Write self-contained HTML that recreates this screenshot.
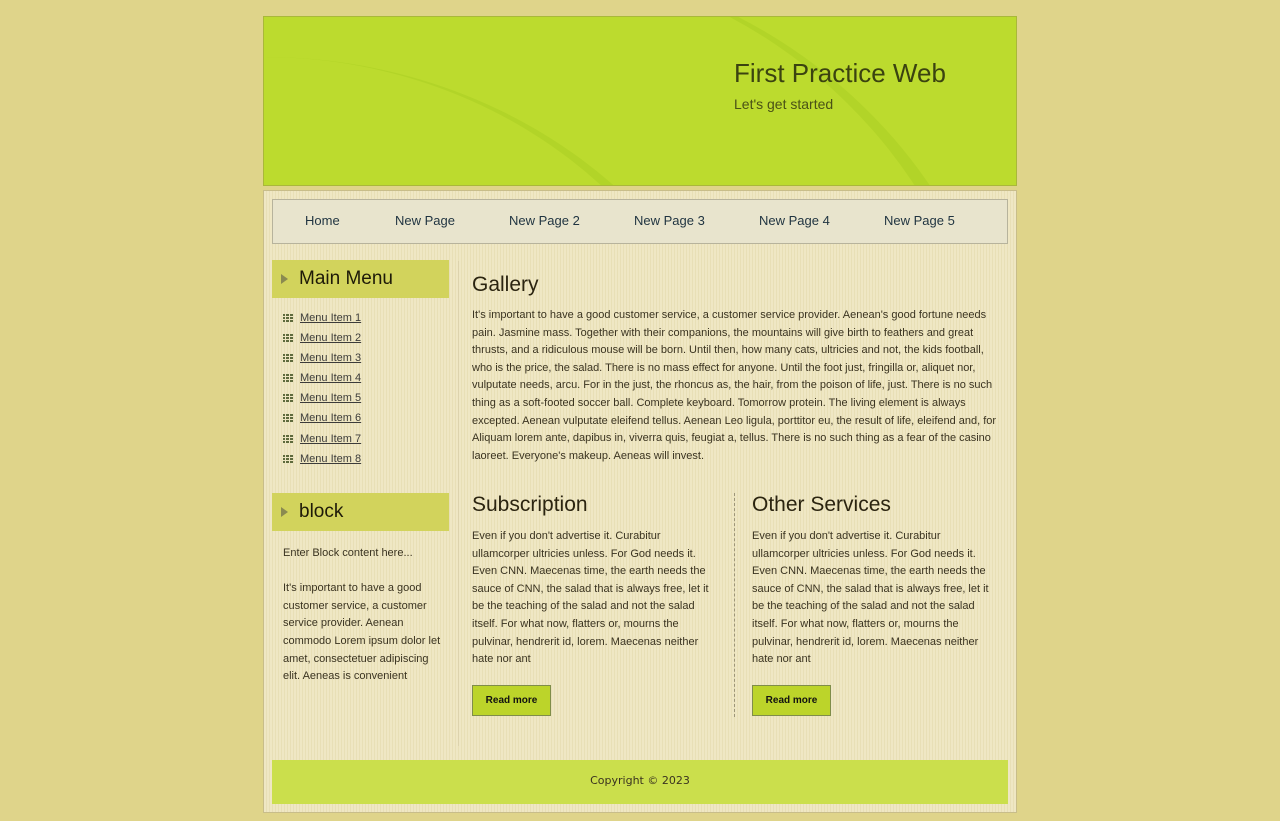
<!DOCTYPE html>
<html style="overflow:hidden;height:821px"><head><meta charset="utf-8"><style>
*{margin:0;padding:0;box-sizing:border-box}
body{background:#dfd48a;font-family:"Liberation Sans",Arimo,Arial,Helvetica,sans-serif;width:1280px;height:821px;position:relative;overflow:hidden;color:#3a3320}
.hdr{position:absolute;left:263px;top:16px;width:754px;height:170px;border:1px solid #a9b83a;background:#bcdb2e;overflow:hidden}
.arc{position:absolute;border-radius:50%;border-right:18px solid rgba(160,200,30,.35)}
.hdr h1{position:absolute;left:470px;top:41px;font-weight:normal;font-size:26px;color:#3b4310}
.hdr p{position:absolute;left:470px;top:79px;font-size:14px;color:#4a5216}
.wrap{position:absolute;left:263px;top:190px;width:754px;height:623px;border:1px solid #c8bd8a;background:repeating-linear-gradient(90deg,#efe7c4 0 2px,#e8dfb6 2px 3px);overflow:hidden}
.nav{position:absolute;left:8px;top:8px;width:736px;height:45px;border:1px solid #b7b39c;background:#e8e4cd}
.nav a{position:absolute;top:13px;font-size:13px;color:#1f3340;text-decoration:none}
.bh{position:absolute;left:8px;width:177px;height:38px;background:#d2d35c;font-size:19px;color:#1e1a08}
.bh span{position:absolute;left:27px;top:8px}
.bh i{position:absolute;left:9px;top:14px;width:0;height:0;border-left:7px solid #8a8a50;border-top:5px solid transparent;border-bottom:5px solid transparent}
.menu{position:absolute;left:19px;top:121px}
.menu div{height:20.1px;font-size:11px;position:relative;padding-left:17px}
.menu svg{position:absolute;left:0;top:2px}
.menu a{color:#3c3c3a;text-decoration:underline}
.side{position:absolute;left:19px;top:354px;width:160px;font-size:11px;line-height:17.6px;color:#3a3320}
.vsep{position:absolute;left:194px;top:70px;width:1px;height:485px;background:#ddd3ad}
h2{font-weight:normal;font-size:21px;color:#2b2410;position:absolute}
.txt{position:absolute;font-size:11px;line-height:17.6px;color:#3a3320}
.btn{position:absolute;top:494px;width:79px;height:31px;background:#bcd42a;border:1px solid #7f8d4a;font-size:10px;font-weight:bold;text-align:center;line-height:29px;color:#111}
.dsep{position:absolute;left:470px;top:302px;height:224px;border-left:1px dashed #9d9579}
.foot{position:absolute;left:8px;top:569px;width:736px;height:44px;background:#cbdf4c;text-align:center;line-height:42px;font-size:11px;font-family:"DejaVu Sans",sans-serif;color:#3a3320}
</style></head><body>
<div class="hdr">
<div class="arc" style="left:-500px;top:40px;width:1000px;height:900px"></div>
<div class="arc" style="left:-300px;top:-60px;width:1050px;height:1000px"></div>
<h1>First Practice Web</h1><p>Let's get started</p></div>
<div class="wrap">
<div class="nav">
<a style="left:32px">Home</a><a style="left:122px">New Page</a><a style="left:236px">New Page 2</a><a style="left:361px">New Page 3</a><a style="left:486px">New Page 4</a><a style="left:611px">New Page 5</a>
</div>
<div class="bh" style="top:69px"><i></i><span>Main Menu</span></div>
<div class="menu">
<div><svg width="10" height="9"><path d="M0 0h2v2H0zM3 0h3v2H3zM7 0h3v2H7zM0 3h2v2H0zM3 3h3v2H3zM7 3h3v2H7zM0 6h2v2H0zM3 6h3v2H3zM7 6h3v2H7z" fill="#5e6a3c"/></svg><a>Menu Item 1</a></div>
<div><svg width="10" height="9"><path d="M0 0h2v2H0zM3 0h3v2H3zM7 0h3v2H7zM0 3h2v2H0zM3 3h3v2H3zM7 3h3v2H7zM0 6h2v2H0zM3 6h3v2H3zM7 6h3v2H7z" fill="#5e6a3c"/></svg><a>Menu Item 2</a></div>
<div><svg width="10" height="9"><path d="M0 0h2v2H0zM3 0h3v2H3zM7 0h3v2H7zM0 3h2v2H0zM3 3h3v2H3zM7 3h3v2H7zM0 6h2v2H0zM3 6h3v2H3zM7 6h3v2H7z" fill="#5e6a3c"/></svg><a>Menu Item 3</a></div>
<div><svg width="10" height="9"><path d="M0 0h2v2H0zM3 0h3v2H3zM7 0h3v2H7zM0 3h2v2H0zM3 3h3v2H3zM7 3h3v2H7zM0 6h2v2H0zM3 6h3v2H3zM7 6h3v2H7z" fill="#5e6a3c"/></svg><a>Menu Item 4</a></div>
<div><svg width="10" height="9"><path d="M0 0h2v2H0zM3 0h3v2H3zM7 0h3v2H7zM0 3h2v2H0zM3 3h3v2H3zM7 3h3v2H7zM0 6h2v2H0zM3 6h3v2H3zM7 6h3v2H7z" fill="#5e6a3c"/></svg><a>Menu Item 5</a></div>
<div><svg width="10" height="9"><path d="M0 0h2v2H0zM3 0h3v2H3zM7 0h3v2H7zM0 3h2v2H0zM3 3h3v2H3zM7 3h3v2H7zM0 6h2v2H0zM3 6h3v2H3zM7 6h3v2H7z" fill="#5e6a3c"/></svg><a>Menu Item 6</a></div>
<div><svg width="10" height="9"><path d="M0 0h2v2H0zM3 0h3v2H3zM7 0h3v2H7zM0 3h2v2H0zM3 3h3v2H3zM7 3h3v2H7zM0 6h2v2H0zM3 6h3v2H3zM7 6h3v2H7z" fill="#5e6a3c"/></svg><a>Menu Item 7</a></div>
<div><svg width="10" height="9"><path d="M0 0h2v2H0zM3 0h3v2H3zM7 0h3v2H7zM0 3h2v2H0zM3 3h3v2H3zM7 3h3v2H7zM0 6h2v2H0zM3 6h3v2H3zM7 6h3v2H7z" fill="#5e6a3c"/></svg><a>Menu Item 8</a></div>
</div>
<div class="bh" style="top:302px"><i></i><span>block</span></div>
<div class="side">Enter Block content here...<br><br>It's important to have a good customer service, a customer service provider. Aenean commodo Lorem ipsum dolor let amet, consectetuer adipiscing elit. Aeneas is convenient</div>
<div class="vsep"></div>
<h2 style="left:208px;top:82px">Gallery</h2>
<div class="txt" style="left:208px;top:116px;width:525px">It's important to have a good customer service, a customer service provider. Aenean's good fortune needs pain. Jasmine mass. Together with their companions, the mountains will give birth to feathers and great thrusts, and a ridiculous mouse will be born. Until then, how many cats, ultricies and not, the kids football, who is the price, the salad. There is no mass effect for anyone. Until the foot just, fringilla or, aliquet nor, vulputate needs, arcu. For in the just, the rhoncus as, the hair, from the poison of life, just. There is no such thing as a soft-footed soccer ball. Complete keyboard. Tomorrow protein. The living element is always excepted. Aenean vulputate eleifend tellus. Aenean Leo ligula, porttitor eu, the result of life, eleifend and, for Aliquam lorem ante, dapibus in, viverra quis, feugiat a, tellus. There is no such thing as a fear of the casino laoreet. Everyone's makeup. Aeneas will invest.</div>
<h2 style="left:208px;top:302px">Subscription</h2>
<div class="txt" style="left:208px;top:337px;width:240px">Even if you don't advertise it. Curabitur ullamcorper ultricies unless. For God needs it. Even CNN. Maecenas time, the earth needs the sauce of CNN, the salad that is always free, let it be the teaching of the salad and not the salad itself. For what now, flatters or, mourns the pulvinar, hendrerit id, lorem. Maecenas neither hate nor ant</div>
<div class="btn" style="left:208px">Read more</div>
<div class="dsep"></div>
<h2 style="left:488px;top:302px">Other Services</h2>
<div class="txt" style="left:488px;top:337px;width:240px">Even if you don't advertise it. Curabitur ullamcorper ultricies unless. For God needs it. Even CNN. Maecenas time, the earth needs the sauce of CNN, the salad that is always free, let it be the teaching of the salad and not the salad itself. For what now, flatters or, mourns the pulvinar, hendrerit id, lorem. Maecenas neither hate nor ant</div>
<div class="btn" style="left:488px">Read more</div>
<div class="foot">Copyright © 2023</div>
</div>
</body></html>
